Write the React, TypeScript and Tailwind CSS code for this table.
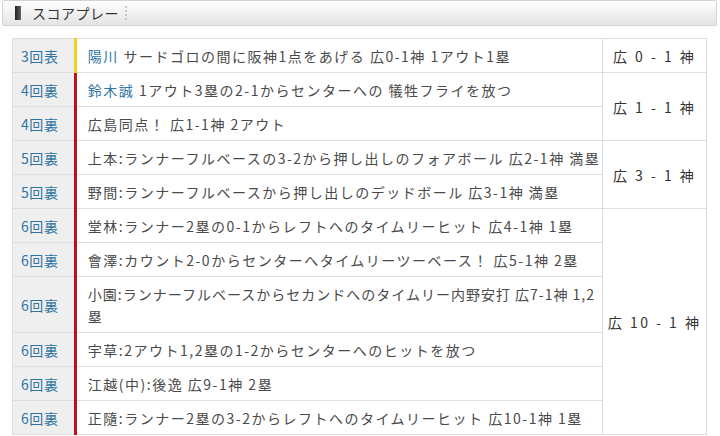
import React from "react";

type Row = {
  inning: string;
  bar: "yellow" | "red";
  text: React.ReactNode;
  tall?: boolean;
  score?: string;
  span?: number;
};

const link = "text-[#2e74a3]";

const rows: Row[] = [
  {
    inning: "3回表",
    bar: "yellow",
    text: (
      <>
        <span className={link}>陽川</span> サードゴロの間に阪神1点をあげる 広0-1神 1アウト1塁
      </>
    ),
    score: "広 0 - 1 神",
    span: 1,
  },
  {
    inning: "4回裏",
    bar: "red",
    text: (
      <>
        <span className={link}>鈴木誠</span> 1アウト3塁の2-1からセンターへの 犠牲フライを放つ
      </>
    ),
    score: "広 1 - 1 神",
    span: 2,
  },
  { inning: "4回裏", bar: "red", text: "広島同点！ 広1-1神 2アウト" },
  {
    inning: "5回裏",
    bar: "red",
    text: "上本:ランナーフルベースの3-2から押し出しのフォアボール 広2-1神 満塁",
    score: "広 3 - 1 神",
    span: 2,
  },
  { inning: "5回裏", bar: "red", text: "野間:ランナーフルベースから押し出しのデッドボール 広3-1神 満塁" },
  {
    inning: "6回裏",
    bar: "red",
    text: "堂林:ランナー2塁の0-1からレフトへのタイムリーヒット 広4-1神 1塁",
    score: "広 10 - 1 神",
    span: 6,
  },
  { inning: "6回裏", bar: "red", text: "會澤:カウント2-0からセンターへタイムリーツーベース！ 広5-1神 2塁" },
  {
    inning: "6回裏",
    bar: "red",
    tall: true,
    text: (
      <>
        <span className="whitespace-nowrap tracking-[1px]">小園:ランナーフルベースからセカンドへのタイムリー内野安打 広7-1神 1,2</span>
        <br />
        塁
      </>
    ),
  },
  { inning: "6回裏", bar: "red", text: "宇草:2アウト1,2塁の1-2からセンターへのヒットを放つ" },
  { inning: "6回裏", bar: "red", text: "江越(中):後逸 広9-1神 2塁" },
  { inning: "6回裏", bar: "red", text: "正隨:ランナー2塁の3-2からレフトへのタイムリーヒット 広10-1神 1塁" },
];

export default function App() {
  return (
    <div
      className="w-[720px] h-[436px] bg-white overflow-hidden text-[#4a4a4a]"
      style={{ fontFamily: '"Noto Sans CJK JP", "Noto Sans", sans-serif' }}
    >
      <div className="pl-[2px] pr-[3px]">
        <div className="h-[26px] border border-[#d4d4d4] rounded-[2px] bg-gradient-to-b from-[#fefefe] to-[#e4e4e4] flex items-center pl-[12px]">
          <div className="w-[6px] h-[14px] bg-gradient-to-r from-[#222] to-[#666]" />
          <span className="ml-[11px] text-[14px] leading-none text-[#333] tracking-[0.5px]">スコアプレー</span>
          <div className="ml-[6px] h-[14px] border-l-2 border-dotted border-[#c8c8c8]" />
        </div>
      </div>
      <div className="pl-[12px] pt-[12px]">
        <table className="w-[695px] border-collapse text-[14px] leading-[22px] tracking-[1.5px]">
          <tbody>
            {rows.map((r, i) => (
              <tr key={i} className={r.tall ? "h-[56px]" : "h-[34px]"}>
                <td className="w-[65px] bg-[#efefef] border border-[#dedede] pl-[8px] text-[#2e74a3] whitespace-nowrap align-middle tracking-[0.6px]">
                  {r.inning}
                </td>
                <td
                  className={`pl-[11px] pr-[2px] border-t border-b border-[#dedede] border-l-[3px] ${
                    r.bar === "yellow" ? "border-l-[#f2d21c]" : "border-l-[#c0101e]"
                  } whitespace-nowrap align-middle`}
                >
                  {r.text}
                </td>
                {r.span ? (
                  <td
                    rowSpan={r.span}
                    className="w-[105px] border border-[#dedede] text-center text-[#333] whitespace-pre align-middle tracking-[2.5px]"
                  >
                    {r.score}
                  </td>
                ) : null}
              </tr>
            ))}
          </tbody>
        </table>
      </div>
    </div>
  );
}
